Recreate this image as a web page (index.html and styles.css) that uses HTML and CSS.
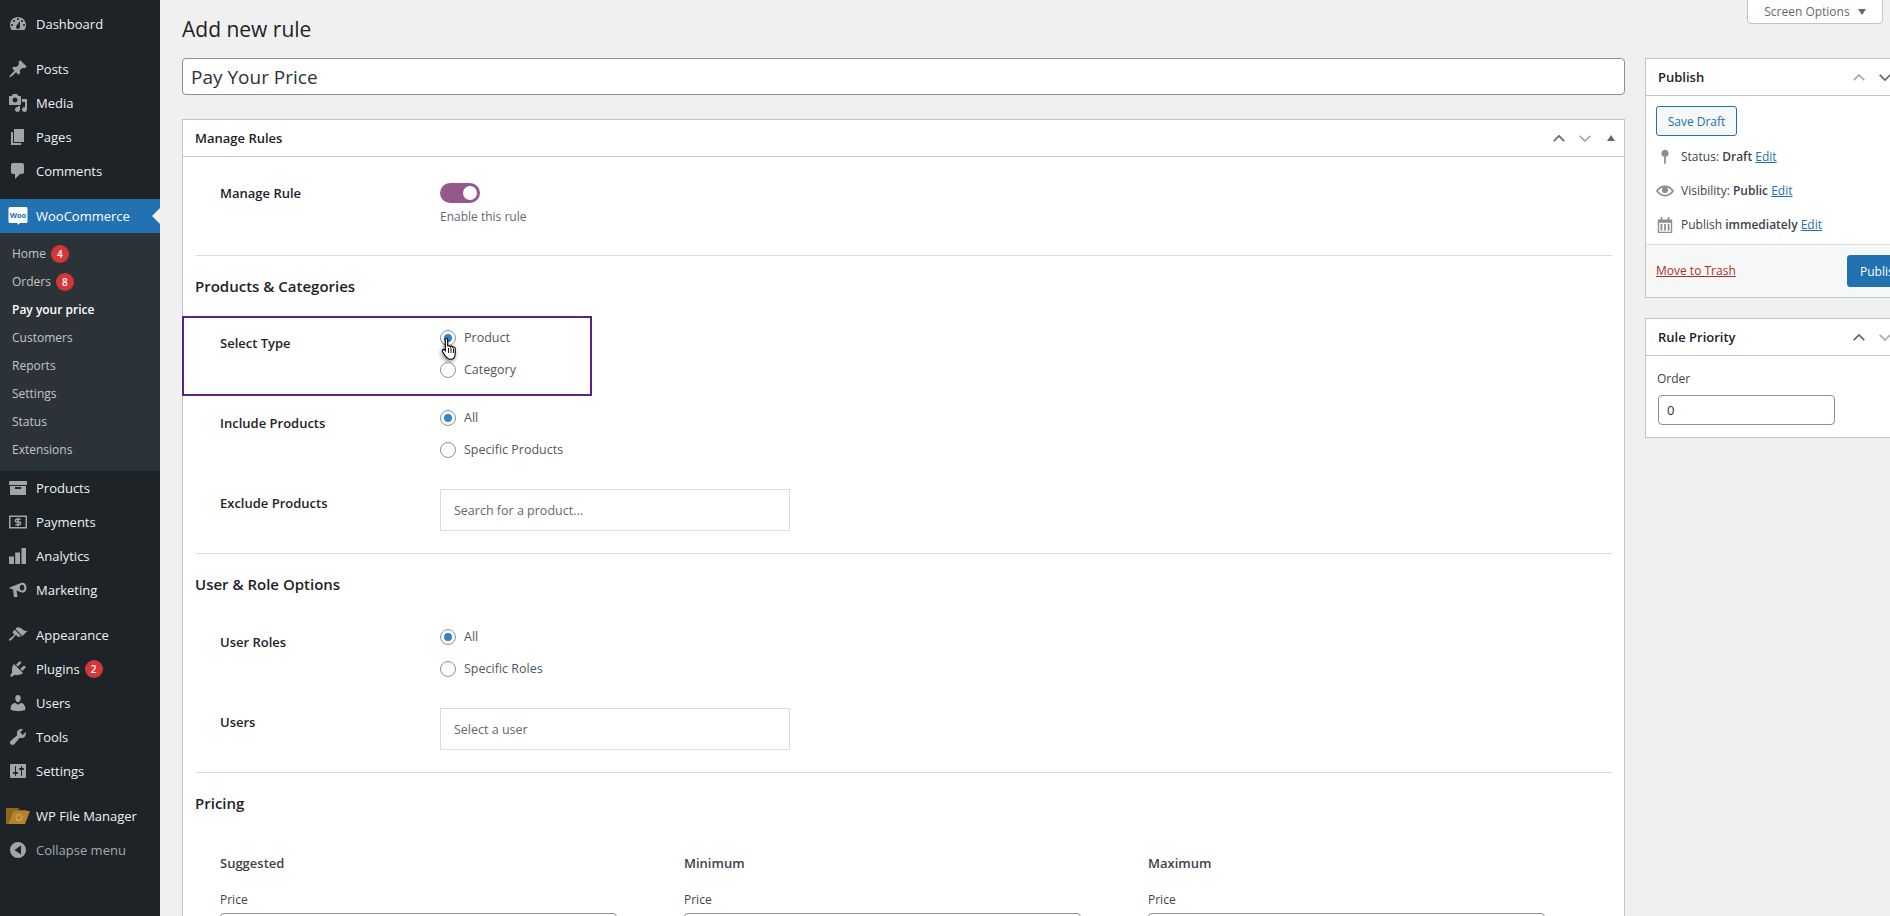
FILE: index.html
```html
<!DOCTYPE html>
<html lang="en">
<head>
  <meta charset="UTF-8">
  <title>Add new rule</title>
  <link rel="stylesheet" href="styles.css">
</head>
<body>
  <div class="admin">
    <nav class="sidebar">
      <ul class="menu">
        <li class="menu-item sep"><svg class="menu-icon" viewBox="0 0 20 20"><path d="M3.76 16h12.48c1.1-1.37 1.76-3.11 1.76-5 0-4.42-3.58-8-8-8s-8 3.58-8 8c0 1.89.66 3.63 1.76 5zM10 4c.55 0 1 .45 1 1s-.45 1-1 1-1-.45-1-1 .45-1 1-1zM6 6c.55 0 1 .45 1 1s-.45 1-1 1-1-.45-1-1 .45-1 1-1zm8 0c.55 0 1 .45 1 1s-.45 1-1 1-1-.45-1-1 .45-1 1-1zm-5.37 5.55L12 7v6c0 1.1-.9 2-2 2s-2-.9-2-2c0-.57.24-1.08.63-1.45zM4 10c.55 0 1 .45 1 1s-.45 1-1 1-1-.45-1-1 .45-1 1-1zm12 0c.55 0 1 .45 1 1s-.45 1-1 1-1-.45-1-1 .45-1 1-1z" fill-rule="evenodd"/></svg>Dashboard</li>
        <li class="menu-item"><svg class="menu-icon" viewBox="0 0 20 20"><path d="M10.44 3.02l1.82-1.82 6.36 6.35-1.83 1.82c-1.05-.68-2.48-.57-3.41.36l-.75.75c-.92.93-1.04 2.35-.35 3.41l-1.83 1.82-2.41-2.41-2.8 2.79c-.42.42-3.38 2.71-3.8 2.29s1.86-3.39 2.28-3.81l2.79-2.79L4.1 9.36l1.83-1.82c1.05.69 2.48.57 3.4-.36l.75-.75c.93-.92 1.05-2.35.36-3.41z"/></svg>Posts</li>
        <li class="menu-item"><svg class="menu-icon" viewBox="0 0 20 20"><path d="M13 11V4c0-.55-.45-1-1-1h-1.67L9 1H5L3.67 3H2c-.55 0-1 .45-1 1v7c0 .55.45 1 1 1h10c.55 0 1-.45 1-1zM7 4.5c1.38 0 2.5 1.12 2.5 2.5S8.38 9.5 7 9.5 4.5 8.38 4.5 7 5.62 4.5 7 4.5zM14 6h5v10.5c0 1.38-1.12 2.5-2.5 2.5S14 17.88 14 16.5s1.12-2.5 2.5-2.5c.17 0 .34.02.5.05V9h-3V6zm-4 8.05V13h2v3.5c0 1.38-1.12 2.5-2.5 2.5S7 17.88 7 16.5 8.12 14 9.5 14c.17 0 .34.02.5.05z"/></svg>Media</li>
        <li class="menu-item"><svg class="menu-icon" viewBox="0 0 20 20"><path d="M6 15V2h10v13H6zm-1 1h8v2H3V5h2v11z"/></svg>Pages</li>
        <li class="menu-item sep"><svg class="menu-icon" viewBox="0 0 20 20"><path d="M5 2h9c1.1 0 2 .9 2 2v7c0 1.1-.9 2-2 2h-2l-5 5v-5H5c-1.1 0-2-.9-2-2V4c0-1.1.9-2 2-2z"/></svg>Comments</li>
        <li class="menu-item current">
          <svg class="menu-icon" viewBox="0 0 20 20"><path d="M2 1h16a1.500 1.500 0 0 1 1.500 1.500v13a1.500 1.500 0 0 1-1.500 1.500h-6l-2 2-.5-2H2a1.500 1.500 0 0 1-1.500-1.500v-13A1.500 1.500 0 0 1 2 1z" fill="#fff"/><text x="10" y="12" class="woo-mark">Woo</text></svg>WooCommerce
        </li>
        <li class="submenu">
          <div class="sub-item">Home <span class="badge">4</span></div>
          <div class="sub-item">Orders <span class="badge">8</span></div>
          <div class="sub-item active">Pay your price</div>
          <div class="sub-item">Customers</div>
          <div class="sub-item">Reports</div>
          <div class="sub-item">Settings</div>
          <div class="sub-item">Status</div>
          <div class="sub-item">Extensions</div>
        </li>
        <li class="menu-item"><svg class="menu-icon" viewBox="0 0 20 20"><path d="M19 4v3H1V4c0-.55.45-1 1-1h16c.55 0 1 .45 1 1zM2 8h16v8c0 .55-.45 1-1 1H3c-.55 0-1-.45-1-1V8zm11 3V9H7v2h6z" fill-rule="evenodd"/></svg>Products</li>
        <li class="menu-item"><svg class="menu-icon" viewBox="0 0 20 20"><path d="M1 3.500h18v13H1zM2.500 5v10h15V5z" fill-rule="evenodd"/><path d="M12.600 7.300H8.700a1.350 1.350 0 0 0 0 2.700h2.600a1.350 1.350 0 0 1 0 2.700H7.400M10 5.800v8.400" fill="none" stroke="currentColor" stroke-width="1.500"/></svg>Payments</li>
        <li class="menu-item"><svg class="menu-icon" viewBox="0 0 20 20"><path d="M1 10.500h5V18H1zM7.200 6.500h4.800V18H7.200zM13.500 2H18v16h-4.500z"/></svg>Analytics</li>
        <li class="menu-item sep"><svg class="menu-icon" viewBox="0 0 20 20"><path d="M1.500 7.500L13 3c3-1.300 5.500 1 5.500 4.500s-2.500 6-5.500 4.800l-4.500-1.700 1 6.400H6l-1-7.500-3.500-1.200zM14 4.800c-1.300 0-2.200 1.200-2.200 2.900s.9 2.900 2.200 2.900 2.300-1.200 2.300-2.900-1-2.900-2.300-2.900z" fill-rule="evenodd"/></svg>Marketing</li>
        <li class="menu-item"><svg class="menu-icon" viewBox="0 0 20 20"><path d="M14.480 11.060L7.410 3.990l1.500-1.500c.5-.56 2.300-.47 3.510.32 1.210.8 1.430 1.280 2.910 2.100 1.180.64 2.450 1.260 4.450.85zm-.71.71L6.700 4.700 4.930 6.470c-.39.39-.39 1.020 0 1.410l1.060 1.060c.39.39.39 1.030 0 1.420-.6.6-1.430 1.110-2.210 1.690-.35.26-.7.53-1.010.84C1.430 13.230.4 14.750 1.100 15.450c.7.71 2.220-.33 3.560-1.670.31-.31.58-.66.84-1.010.58-.78 1.090-1.610 1.690-2.210.39-.39 1.020-.39 1.410 0l1.060 1.060c.39.39 1.020.39 1.410 0z"/></svg>Appearance</li>
        <li class="menu-item"><svg class="menu-icon" viewBox="0 0 20 20"><path d="M13.110 4.360L9.870 7.600 8 5.730l3.240-3.240c.35-.34 1.050-.2 1.560.32.52.51.66 1.210.31 1.550zm-8 1.770l.91-1.120 9.010 9.010-1.190.84c-.71.71-2.630 1.160-3.820 1.160H6.140L4.900 17.260c-.59.59-1.540.59-2.120 0-.59-.58-.59-1.530 0-2.120l1.240-1.240v-3.880c0-1.130.4-3.190 1.090-3.890zm7.260 3.970l3.240-3.240c.34-.35 1.040-.21 1.550.31.52.51.66 1.210.31 1.550l-3.240 3.250z"/></svg>Plugins <span class="badge">2</span></li>
        <li class="menu-item"><svg class="menu-icon" viewBox="0 0 20 20"><path d="M10 9.250c-2.270 0-2.730-3.440-2.730-3.440C7 4.020 7.820 2 9.970 2c2.160 0 2.980 2.020 2.710 3.810 0 0-.41 3.440-2.680 3.440zm0 2.570L12.720 10c2.390 0 4.520 2.330 4.520 4.530v2.490s-3.650 1.130-7.240 1.130c-3.650 0-7.240-1.130-7.240-1.130v-2.490c0-2.250 1.940-4.480 4.470-4.480z"/></svg>Users</li>
        <li class="menu-item"><svg class="menu-icon" viewBox="0 0 20 20"><path d="M16.680 9.770c-1.340 1.340-3.300 1.670-4.950.99l-5.410 6.520c-.99.99-2.590.99-3.580 0s-.99-2.590 0-3.570l6.520-5.420c-.68-1.650-.35-3.610.99-4.950 1.280-1.280 3.120-1.620 4.720-1.060l-2.890 2.890 2.820 2.820 2.860-2.870c.53 1.580.18 3.390-1.080 4.650z"/></svg>Tools</li>
        <li class="menu-item sep"><svg class="menu-icon" viewBox="0 0 20 20"><path d="M18 16V4c0-.55-.45-1-1-1H3c-.55 0-1 .45-1 1v12c0 .55.45 1 1 1h14c.55 0 1-.45 1-1zM8 11h1c.55 0 1 .45 1 1s-.45 1-1 1H8v1.500c0 .28-.22.5-.5.5s-.5-.22-.5-.5V13H6c-.55 0-1-.45-1-1s.45-1 1-1h1V5.500c0-.28.22-.5.5-.5s.5.22.5.5V11zm5-2h-1c-.55 0-1-.45-1-1s.45-1 1-1h1V5.500c0-.28.22-.5.5-.5s.5.22.5.5V7h1c.55 0 1 .45 1 1s-.45 1-1 1h-1v5.500c0 .28-.22.5-.5.5s-.5-.22-.5-.5V9z" fill-rule="evenodd"/></svg>Settings</li>
        <li class="menu-item"><svg class="menu-icon folder" viewBox="0 0 24 20"><path d="M0 2h12l2 2h7l-1 1H7L2 18H0z" fill="#8f6420"/><path d="M7 5h17l-5 13H2z" fill="#b5822a"/><circle cx="13" cy="11.500" r="3" fill="none" stroke="#d9b36c" stroke-width="1"/></svg>WP File Manager</li>
        <li class="menu-item collapse"><svg class="menu-icon" viewBox="0 0 20 20"><path d="M10 2a8 8 0 1 1 0 16 8 8 0 0 1 0-16zm3 3.500L6.500 10l6.500 4.500z" fill-rule="evenodd"/></svg>Collapse menu</li>
      </ul>
    </nav>

    <main class="content">
      <button class="screen-options" type="button">Screen Options <span class="tri-down"></span></button>
      <h1 class="page-title">Add new rule</h1>

      <div class="columns">
        <div class="col-main">
          <input class="title-input" type="text" value="Pay Your Price">

          <section class="box">
            <div class="box-head">
              <h2 class="box-title">Manage Rules</h2>
              <div class="handles">
                <span class="handle"><svg viewBox="0 0 16 10" class="chev"><path d="M2 8l6-6 6 6"/></svg></span>
                <span class="handle off"><svg viewBox="0 0 16 10" class="chev"><path d="M2 2l6 6 6-6"/></svg></span>
                <span class="handle"><span class="tri-up"></span></span>
              </div>
            </div>
            <div class="box-body">
              <div class="row row-toggle">
                <div class="row-label">Manage Rule</div>
                <div>
                  <span class="toggle"><span class="toggle-knob"></span></span>
                  <div class="help">Enable this rule</div>
                </div>
              </div>
              <hr class="divider">

              <h3 class="section-title">Products &amp; Categories</h3>
              <div class="row row-radio highlight">
                <div class="row-label">Select Type</div>
                <div class="radios">
                  <label class="radio-line"><input type="radio" name="type" checked>Product
                    <svg class="cursor" viewBox="0 0 18 24"><path d="M5 1.500c1 0 1.700.7 1.700 1.700v6.200c.3-.9 2.300-.9 2.600.3.400-.8 2.200-.8 2.500.5.500-.6 2.300-.4 2.400 1.200v5c0 3-1.500 5.800-4.500 5.800H9c-2.500 0-3.500-1.500-5-3.700L1.500 14.500c-.9-1.400.8-2.800 2.100-1.500l.7.800V3.200C3.300 2.200 4 1.500 5 1.500z" fill="#fff" stroke="#000" stroke-width="1.100"/><path d="M7.500 11v5M10 11v5M12.500 11.500V16" stroke="#000" stroke-width=".9" fill="none"/></svg>
                  </label>
                  <label class="radio-line"><input type="radio" name="type">Category</label>
                </div>
              </div>
              <div class="row row-radio">
                <div class="row-label">Include Products</div>
                <div class="radios">
                  <label class="radio-line"><input type="radio" name="inc" checked>All</label>
                  <label class="radio-line"><input type="radio" name="inc">Specific Products</label>
                </div>
              </div>
              <div class="row row-select">
                <div class="row-label">Exclude Products</div>
                <input class="search-box" type="text" placeholder="Search for a product...">
              </div>
              <hr class="divider">

              <h3 class="section-title">User &amp; Role Options</h3>
              <div class="row row-radio roles">
                <div class="row-label">User Roles</div>
                <div class="radios">
                  <label class="radio-line"><input type="radio" name="role" checked>All</label>
                  <label class="radio-line"><input type="radio" name="role">Specific Roles</label>
                </div>
              </div>
              <div class="row row-select">
                <div class="row-label">Users</div>
                <input class="search-box" type="text" placeholder="Select a user">
              </div>
              <hr class="divider">

              <h3 class="section-title">Pricing</h3>
              <div class="price-grid">
                <div>
                  <div class="price-head">Suggested</div>
                  <div class="price-label">Price</div>
                  <input class="price-input" type="text">
                </div>
                <div>
                  <div class="price-head">Minimum</div>
                  <div class="price-label">Price</div>
                  <input class="price-input" type="text">
                </div>
                <div>
                  <div class="price-head">Maximum</div>
                  <div class="price-label">Price</div>
                  <input class="price-input" type="text">
                </div>
              </div>
            </div>
          </section>
        </div>

        <aside class="col-side">
          <section class="box side-box">
            <div class="box-head">
              <h2 class="box-title">Publish</h2>
              <div class="handles">
                <span class="handle off"><svg viewBox="0 0 16 10" class="chev"><path d="M2 8l6-6 6 6"/></svg></span>
                <span class="handle"><svg viewBox="0 0 16 10" class="chev"><path d="M2 2l6 6 6-6"/></svg></span>
                <span class="handle"><span class="tri-up"></span></span>
              </div>
            </div>
            <div class="publish-body">
              <button class="btn-outline" type="button">Save Draft</button>
              <div class="misc">
                <svg class="misc-icon" viewBox="0 0 20 20"><path d="M14 6c0 1.860-1.280 3.410-3 3.860V16c0 1-2 2-2 2V9.860c-1.720-.45-3-2-3-3.860 0-2.210 1.790-4 4-4s4 1.790 4 4z"/></svg>
                <span>Status: <b>Draft</b> <a class="link">Edit</a></span>
              </div>
              <div class="misc">
                <svg class="misc-icon" viewBox="0 0 20 20"><path d="M19.700 9.400C17.700 6 14 3.900 10 3.900S2.300 6 .3 9.400L0 10l.3.6c2 3.400 5.700 5.500 9.700 5.500s7.700-2.100 9.700-5.500l.3-.6-.3-.6zM10 14.100c-3.100 0-6-1.600-7.700-4.100C3.600 8 5.700 6.600 8 6.100c-.9.6-1.500 1.700-1.500 2.900 0 1.900 1.600 3.500 3.500 3.500s3.500-1.600 3.500-3.500c0-1.200-.6-2.300-1.500-2.900 2.300.5 4.400 1.900 5.700 3.900-1.700 2.500-4.600 4.100-7.700 4.100z"/></svg>
                <span>Visibility: <b>Public</b> <a class="link">Edit</a></span>
              </div>
              <div class="misc">
                <svg class="misc-icon" viewBox="0 0 20 20"><path d="M5 1.500h2V4h6V1.500h2V4h3v15H2V4h3zM3.500 7.500v10h13v-10zM5 9h2v7H5zM9 9h2v7H9zM13 9h2v7h-2z" fill-rule="evenodd"/></svg>
                <span>Publish <b>immediately</b> <a class="link">Edit</a></span>
              </div>
            </div>
            <div class="publish-actions">
              <a class="trash">Move to Trash</a>
              <button class="btn-primary" type="button">Publish</button>
            </div>
          </section>

          <section class="box side-box">
            <div class="box-head">
              <h2 class="box-title">Rule Priority</h2>
              <div class="handles">
                <span class="handle"><svg viewBox="0 0 16 10" class="chev"><path d="M2 8l6-6 6 6"/></svg></span>
                <span class="handle off"><svg viewBox="0 0 16 10" class="chev"><path d="M2 2l6 6 6-6"/></svg></span>
                <span class="handle"><span class="tri-up"></span></span>
              </div>
            </div>
            <div class="priority-body">
              <div class="order-label">Order</div>
              <input class="order-input" type="text" value="0">
            </div>
          </section>
        </aside>
      </div>
    </main>
  </div>
</body>
</html>
```

FILE: styles.css
```css
html, body {
  margin: 0;
  height: 916px;
  overflow: hidden;
}
body {
  background-color: #f0f0f1;
  color: #3c434a;
  font-family: "Open Sans", "Noto Sans", Arial, sans-serif;
  font-size: 13px;
  line-height: 20px;
}
.admin {
  display: flex;
  height: 916px;
}

/* sidebar */
.sidebar {
  flex: 0 0 160px;
  background-color: #1d2327;
}
.menu {
  list-style: none;
  margin: 0;
  padding: 7px 0 0;
}
.menu-item {
  position: relative;
  display: flex;
  align-items: center;
  height: 34px;
  color: #f0f0f1;
  font-size: 13px;
  white-space: nowrap;
}
.menu-item.sep {
  margin-bottom: 11px;
}
.menu-icon {
  flex: 0 0 20px;
  width: 20px;
  height: 20px;
  margin: 0 8px;
  fill: #a0a5aa;
  color: #a0a5aa;
}
.menu-icon.folder {
  flex-basis: 24px;
  width: 24px;
  margin: 0 6px 0 6px;
}
.current {
  background-color: #2271b1;
  color: #fff;
}
.current::after {
  content: "";
  position: absolute;
  right: 0;
  top: 9px;
  border: 8px solid transparent;
  border-right-color: #f0f0f1;
  border-left-width: 0;
}
.woo-mark {
  fill: #2271b1;
  font-size: 7.500px;
  font-weight: 700;
  text-anchor: middle;
}
.collapse {
  color: #a7aaad;
}
.submenu {
  padding: 7px 0;
  background-color: #2c3338;
}
.sub-item {
  display: flex;
  align-items: center;
  gap: 5px;
  height: 28px;
  padding-left: 12px;
  color: #c3c4c7;
  font-size: 12px;
}
.sub-item.active {
  color: #fff;
  font-weight: 600;
}
.badge {
  display: inline-block;
  width: 18px;
  height: 18px;
  border-radius: 50%;
  background-color: #d63638;
  color: #fff;
  font-size: 10px;
  font-weight: 600;
  line-height: 18px;
  text-align: center;
}
.menu-item .badge {
  margin-left: 5px;
}

/* main */
.content {
  flex: 1;
  padding: 0 7px 0 22px;
  min-width: 0;
}
.screen-options {
  float: right;
  box-sizing: border-box;
  height: 25px;
  width: 136px;
  margin-top: -1px;
  padding: 0;
  background-color: #fff;
  border: 1px solid #c3c4c7;
  border-radius: 0 0 4px 4px;
  color: #646970;
  font-family: inherit;
  font-size: 12px;
}
.tri-down {
  display: inline-block;
  margin-left: 5px;
  border: 4.500px solid transparent;
  border-top: 6px solid #646970;
  border-bottom-width: 0;
  vertical-align: 1px;
}
.page-title {
  margin: 15px 0 14px;
  color: #1d2327;
  font-size: 21px;
  font-weight: 400;
  line-height: 29px;
}
.columns {
  display: grid;
  grid-template-columns: 1fr 280px;
  gap: 20px;
}
.title-input {
  display: block;
  box-sizing: border-box;
  width: 100%;
  height: 37px;
  margin-bottom: 24px;
  padding: 0 8px;
  background-color: #fff;
  border: 1px solid #8c8f94;
  border-radius: 4px;
  color: #2c3338;
  font-family: inherit;
  font-size: 19px;
}

/* boxes */
.box {
  background-color: #fff;
  border: 1px solid #c3c4c7;
}
.box-head {
  display: flex;
  justify-content: space-between;
  align-items: center;
  height: 36px;
  border-bottom: 1px solid #c3c4c7;
}
.box-title {
  margin: 0 0 0 12px;
  color: #1d2327;
  font-size: 13px;
  font-weight: 600;
}
.handles {
  display: flex;
}
.handle {
  display: flex;
  align-items: center;
  justify-content: center;
  width: 26px;
  height: 36px;
}
.chev {
  width: 14px;
  height: 9px;
}
.chev path {
  fill: none;
  stroke: #646970;
  stroke-width: 2;
}
.off .chev path {
  stroke: #a7aaad;
}
.tri-up {
  border: 4.500px solid transparent;
  border-bottom: 6px solid #646970;
  border-top-width: 0;
}
.box-body {
  padding: 0 12px;
}

/* rule rows */
.row {
  display: flex;
  padding-left: 25px;
}
.row-label {
  flex: 0 0 220px;
  color: #1d2327;
  font-weight: 600;
}
.row-toggle {
  padding-top: 26px;
}
.row-toggle .row-label {
  padding-top: 0;
}
.toggle {
  display: block;
  box-sizing: border-box;
  width: 40px;
  height: 20px;
  margin-bottom: 4px;
  padding: 3px 3px 3px 23px;
  background-color: #96588a;
  border-radius: 10px;
}
.toggle-knob {
  display: block;
  width: 14px;
  height: 14px;
  background-color: #fff;
  border-radius: 50%;
}
.help {
  color: #646970;
  font-size: 12px;
}
.divider {
  height: 1px;
  margin: 28px 0 0;
  background-color: #dcdcde;
  border: 0;
}
.section-title {
  margin: 19px 0 0;
  color: #1d2327;
  font-size: 15px;
  font-weight: 600;
  line-height: 22px;
}
.row-radio {
  margin-top: 6px;
}
.row-radio .row-label {
  padding-top: 11px;
}
.highlight {
  width: 370px;
  margin: 19px 0 0 -13px;
  padding: 4px 0 8px 36px;
  border: 2px solid #5b2187;
}
.roles {
  margin-top: 26px;
}
.radios {
  display: flex;
  flex-direction: column;
}
.radio-line {
  position: relative;
  display: flex;
  align-items: center;
  height: 32px;
  color: #50575e;
  font-size: 12.500px;
}
.radio-line input {
  appearance: none;
  display: flex;
  align-items: center;
  justify-content: center;
  box-sizing: border-box;
  width: 16px;
  height: 16px;
  margin: 0 8px 0 0;
  background-color: #fff;
  border: 1px solid #8c8f94;
  border-radius: 50%;
}
.radio-line input:checked::before {
  content: "";
  width: 8px;
  height: 8px;
  background-color: #3582c4;
  border-radius: 50%;
}
.cursor {
  position: absolute;
  left: 1px;
  top: 15px;
  width: 18px;
  height: 24px;
  filter: drop-shadow(-1px 2px 2px rgba(0, 0, 0, .45));
}
.row-select {
  margin-top: 23px;
}
.row-select .row-label {
  padding-top: 4px;
}
.search-box {
  box-sizing: border-box;
  width: 350px;
  height: 42px;
  padding: 0 13px;
  background-color: #fff;
  border: 1px solid #dcdcde;
  font-family: inherit;
  font-size: 12.500px;
}
.row-select + .divider {
  margin-top: 22px;
}
.search-box::placeholder {
  color: #646970;
  opacity: 1;
}
.section-title + .row-select {
  margin-top: 26px;
}

/* pricing */
.price-grid {
  display: grid;
  grid-template-columns: repeat(3, 464px);
  margin-top: 39px;
  padding-left: 25px;
}
.price-head {
  color: #3c434a;
  font-weight: 600;
}
.price-label {
  margin: 17px 0 3px;
  font-size: 12px;
}
.price-input {
  display: block;
  box-sizing: border-box;
  width: 397px;
  height: 30px;
  background-color: #fff;
  border: 1px solid #8c8f94;
  border-radius: 4px;
}

/* side column */
.side-box {
  margin-bottom: 20px;
}
.publish-body {
  padding: 10px 10px 0;
}
.btn-outline {
  display: block;
  box-sizing: border-box;
  width: 81px;
  height: 30px;
  margin-bottom: 4px;
  padding: 0;
  background-color: #f6f7f7;
  border: 1px solid #2271b1;
  border-radius: 3px;
  color: #2271b1;
  font-family: inherit;
  font-size: 12px;
}
.misc {
  display: flex;
  align-items: center;
  height: 34px;
  font-size: 12px;
}
.misc b {
  font-weight: 600;
}
.misc-icon {
  flex: 0 0 18px;
  width: 18px;
  height: 18px;
  margin-right: 7px;
  fill: #8c8f94;
}
.link {
  color: #2271b1;
  text-decoration: underline;
}
.publish-actions {
  display: flex;
  justify-content: space-between;
  align-items: center;
  height: 52px;
  margin-top: 2px;
  padding: 0 10px;
  background-color: #f6f7f7;
  border-top: 1px solid #dcdcde;
}
.trash {
  color: #b32d2e;
  font-size: 12px;
  text-decoration: underline;
}
.btn-primary {
  box-sizing: border-box;
  width: 67px;
  height: 32px;
  padding: 0;
  background-color: #2271b1;
  border: 1px solid #2271b1;
  border-radius: 3px;
  color: #fff;
  font-family: inherit;
  font-size: 12px;
}
.priority-body {
  padding: 13px 11px 12px;
}
.order-label {
  margin-bottom: 6px;
  font-size: 12px;
}
.order-input {
  display: block;
  box-sizing: border-box;
  width: 177px;
  height: 30px;
  margin-left: 1px;
  padding: 0 8px;
  background-color: #fff;
  border: 1px solid #8c8f94;
  border-radius: 4px;
  color: #2c3338;
  font-family: inherit;
  font-size: 13px;
}
```
